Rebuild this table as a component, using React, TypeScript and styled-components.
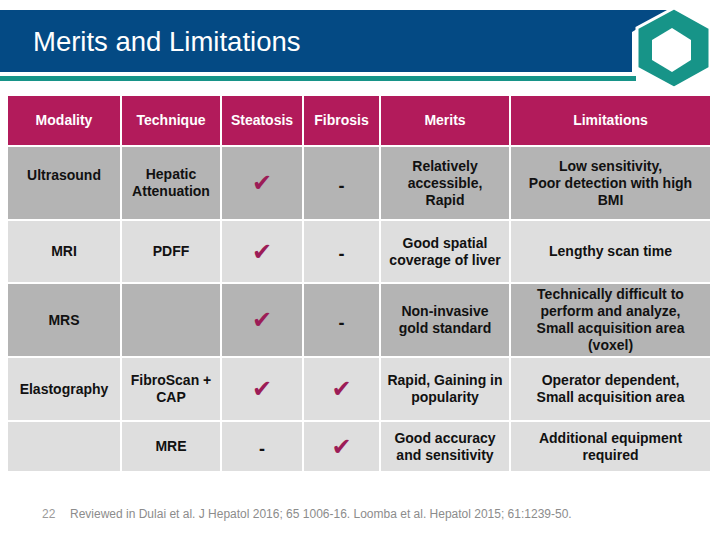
import React from "react";
import styled, { createGlobalStyle } from "styled-components";

const Global = createGlobalStyle`
  html, body { margin: 0; padding: 0; background: #ffffff; }
  body { font-family: "Liberation Sans", Arial, sans-serif; }
`;

const Slide = styled.div`
  position: relative;
  width: 720px;
  height: 540px;
  overflow: hidden;
  background: #ffffff;
  display: flex;
  flex-direction: column;
`;

const Header = styled.header`
  padding-top: 10px;
  display: flex;
  flex-direction: column;
`;

const TitleBar = styled.div`
  width: 668px;
  height: 62px;
  background: #044a84;
  clip-path: polygon(0 0, 668px 0, 632px 22px, 632px 100%, 0 100%);
  display: flex;
  align-items: center;
  padding-left: 33px;
  box-sizing: border-box;
`;

const Title = styled.h1`
  margin: 0;
  color: #ffffff;
  font-family: "Liberation Sans", Arial, sans-serif;
  font-weight: normal;
  font-size: 27.5px;
  line-height: 1;
  padding-top: 1px;
`;

const Rule = styled.div`
  margin-top: 4px;
  width: 636px;
  height: 5px;
  background: #179488;
`;

const Logo = styled.svg`
  position: absolute;
  left: 620px;
  top: 0;
  width: 100px;
  height: 100px;
`;

const Table = styled.div`
  margin: 15px 0 0 8px;
  width: 702px;
  display: grid;
  grid-template-columns: 112px 98px 80px 75px 128px 199px;
  grid-template-rows: 49px 72px 61px 72px 62px 49px;
  gap: 2px;
  background: #ffffff;
`;

type Tone = "head" | "dark" | "light";

const toneBg: Record<Tone, string> = {
  head: "#b21b5b",
  dark: "#b4b4b4",
  light: "#dedede",
};

const Cell = styled.div<{ $tone: Tone; $raise?: boolean }>`
  background: ${(p) => toneBg[p.$tone]};
  color: ${(p) => (p.$tone === "head" ? "#ffffff" : "#111111")};
  display: flex;
  align-items: center;
  justify-content: center;
  text-align: center;
  font-family: "Liberation Sans", Arial, sans-serif;
  font-weight: bold;
  font-size: 14px;
  line-height: 17px;
  padding: 0 4px ${(p) => (p.$raise ? "16px" : "0")} 4px;
  box-sizing: border-box;
`;

const Check = styled.span`
  font-family: "DejaVu Sans", sans-serif;
  font-size: 24px;
  color: #9c1c57;
  line-height: 1;
`;

const Dash = styled.span`
  font-size: 18px;
  font-weight: bold;
  line-height: 1;
  padding-top: 5px;
`;

const Footer = styled.footer`
  margin-top: 36px;
  padding-left: 42px;
  display: flex;
  align-items: baseline;
  color: #8c8c8c;
  font-family: "Liberation Sans", Arial, sans-serif;
  font-size: 12px;
`;

const PageNum = styled.span`
  width: 28px;
  color: #9a9a9a;
`;

const C = () => <Check>✔</Check>;
const D = () => <Dash>-</Dash>;

type Row = {
  tone: Tone;
  raise?: boolean;
  cells: React.ReactNode[];
};

const rows: Row[] = [
  {
    tone: "dark",
    raise: true,
    cells: [
      "Ultrasound",
      <>Hepatic<br />Attenuation</>,
      <C />,
      <D />,
      <>Relatively<br />accessible,<br />Rapid</>,
      <>Low sensitivity,<br />Poor detection with high<br />BMI</>,
    ],
  },
  {
    tone: "light",
    cells: [
      "MRI",
      "PDFF",
      <C />,
      <D />,
      <>Good spatial<br />coverage of liver</>,
      "Lengthy scan time",
    ],
  },
  {
    tone: "dark",
    cells: [
      "MRS",
      "",
      <C />,
      <D />,
      <>Non-invasive<br />gold standard</>,
      <>Technically difficult to<br />perform and analyze,<br />Small acquisition area<br />(voxel)</>,
    ],
  },
  {
    tone: "light",
    cells: [
      "Elastography",
      <>FibroScan +<br />CAP</>,
      <C />,
      <C />,
      <>Rapid, Gaining in<br />popularity</>,
      <>Operator dependent,<br />Small acquisition area</>,
    ],
  },
  {
    tone: "light",
    cells: [
      "",
      "MRE",
      <D />,
      <C />,
      <>Good accuracy<br />and sensitivity</>,
      <>Additional equipment<br />required</>,
    ],
  },
];

const heads = ["Modality", "Technique", "Steatosis", "Fibrosis", "Merits", "Limitations"];

export default function App() {
  return (
    <>
      <Global />
      <Slide>
        <Header>
          <TitleBar>
            <Title>Merits and Limitations</Title>
          </TitleBar>
          <Rule />
        </Header>
        <Logo viewBox="0 0 100 100">
          <polygon
            points="54,8 90,28 90,68 54,88 17,68 17,28"
            fill="#179488"
            stroke="#ffffff"
            strokeWidth="3"
            strokeLinejoin="miter"
          />
          <polygon points="52,28 71,40 71,60 52,72 32,60 32,40" fill="#ffffff" />
        </Logo>
        <Table>
          {heads.map((h) => (
            <Cell key={h} $tone="head">
              {h}
            </Cell>
          ))}
          {rows.map((r, i) =>
            r.cells.map((c, j) => (
              <Cell key={`${i}-${j}`} $tone={r.tone} $raise={r.raise && j === 0}>
                {c}
              </Cell>
            ))
          )}
        </Table>
        <Footer>
          <PageNum>22</PageNum>
          <span>
            Reviewed in Dulai et al. J Hepatol 2016; 65 1006-16. Loomba et al. Hepatol 2015; 61:1239-50.
          </span>
        </Footer>
      </Slide>
    </>
  );
}
